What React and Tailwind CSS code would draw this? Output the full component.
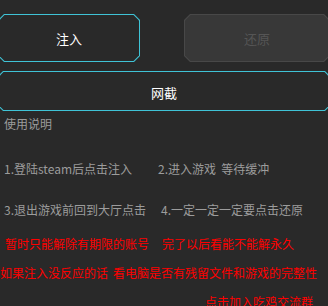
const CUT =
  "[clip-path:polygon(6px_0,calc(100%_-_6px)_0,100%_6px,100%_calc(100%_-_6px),calc(100%_-_6px)_100%,6px_100%,0_calc(100%_-_6px),0_6px)]";
const CUT_IN =
  "[clip-path:polygon(5.5px_0,calc(100%_-_5.5px)_0,100%_5.5px,100%_calc(100%_-_5.5px),calc(100%_-_5.5px)_100%,5.5px_100%,0_calc(100%_-_5.5px),0_5.5px)]";

function ChamferButton({ className, border, fill, text, children }) {
  return (
    <div className={`flex p-px ${CUT} ${border} ${className}`}>
      <button
        className={`flex flex-1 items-center justify-center text-[13px] ${CUT_IN} ${fill} ${text}`}
      >
        {children}
      </button>
    </div>
  );
}

export default function App() {
  return (
    <div
      className="h-[306px] w-[328px] overflow-hidden bg-[#292929] leading-none"
      style={{ fontFamily: '"Noto Sans CJK SC", "Noto Sans", sans-serif' }}
    >
      {/* Top buttons */}
      <div className="mt-[14px] flex">
        <ChamferButton
          className="ml-[-2px] h-[48px] w-[142px]"
          border="bg-[#3fc3d6]"
          fill="bg-[#292929]"
          text="text-white"
        >
          注入
        </ChamferButton>
        <ChamferButton
          className="ml-auto mr-[-2px] h-[48px] w-[146px]"
          border="bg-[#484848]"
          fill="bg-[#383838]"
          text="text-[#555555]"
        >
          还原
        </ChamferButton>
      </div>

      <ChamferButton
        className="mx-[-3px] mt-[9px] h-[40px]"
        border="bg-[#3fc3d6]"
        fill="bg-[#292929]"
        text="text-white pt-[3px]"
      >
        网截
      </ChamferButton>

      {/* Instructions */}
      <div className="mt-[7px] pl-[4px] text-[12px] text-[#9c9c9c]">使用说明</div>

      <div className="mt-[33px] flex text-[12px] text-[#9c9c9c]">
        <div className="w-[158px] pl-[4px]">1.登陆steam后点击注入</div>
        <div>2.进入游戏&nbsp;&nbsp;等待缓冲</div>
      </div>
      <div className="mt-[29px] flex text-[12px] text-[#9c9c9c]">
        <div className="w-[161px] pl-[4px]">3.退出游戏前回到大厅点击</div>
        <div>4.一定一定一定要点击还原</div>
      </div>

      {/* Notes */}
      <div className="mt-[22px] flex text-[12px] text-[#ff0000]">
        <div className="w-[162px] pl-[5px]">暂时只能解除有期限的账号</div>
        <div>完了以后看能不能解永久</div>
      </div>
      <div className="mt-[17px] flex text-[12px] text-[#ff0000]">
        <div className="w-[113px]">如果注入没反应的话</div>
        <div>看电脑是否有残留文件和游戏的完整性</div>
      </div>
      <div className="mt-[17px] pl-[205px] text-[12px] text-[#ff0000]">点击加入吃鸡交流群</div>
    </div>
  );
}
